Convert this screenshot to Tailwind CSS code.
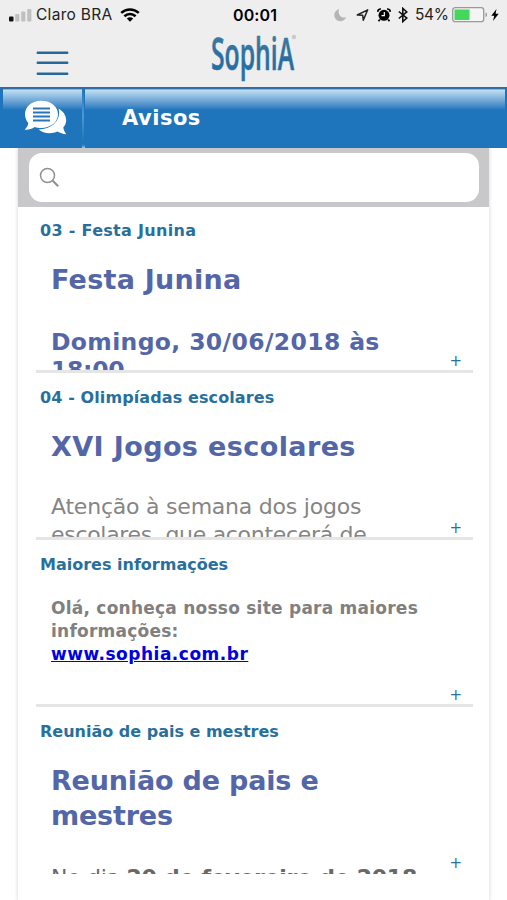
<!DOCTYPE html>
<html lang="pt-BR">
<head>
<meta charset="utf-8">
<meta name="viewport" content="width=device-width, initial-scale=1">
<title>Avisos</title>
<script src="https://cdn.jsdelivr.net/npm/@tailwindcss/browser@4"></script>
</head>
<body class="h-[900px] overflow-hidden bg-white font-['DejaVu_Sans',sans-serif]">
<header class="h-[87px] bg-[#eeeeee] text-black">
  <div class="flex h-[30px] items-center font-['Inter',sans-serif]">
    <svg class="ml-[9px] h-[14px] w-[23px] shrink-0" viewBox="0 0 23 14"><rect x="0" y="8.5" width="4.5" height="5" rx="1" fill="#111"/><g fill="#c0c0c0"><rect x="6.2" y="6" width="4.2" height="7.5" rx="1"/><rect x="12.2" y="3.5" width="4.2" height="10" rx="1"/><rect x="18.2" y="1" width="4.2" height="12.5" rx="1"/></g></svg>
    <span class="ml-[4px] w-[77px] whitespace-nowrap text-[15.5px] tracking-[0.3px] text-[#222]">Claro BRA</span>
    <svg class="ml-[7px] h-[14px] w-[20px] shrink-0" viewBox="0 0 20 14" fill="none" stroke="#000" stroke-width="2.6"><path d="M1.2 4.9C6.2.3 13.8.3 18.8 4.9"/><path d="M4.4 8.2c3.2-2.9 8-2.9 11.2 0"/><path d="M10 13.7 6.8 10.4c1.8-1.7 4.6-1.7 6.4 0Z" fill="#000" stroke="none"/></svg>
    <span class="ml-[93px] w-[46px] whitespace-nowrap text-[16px] font-semibold tracking-[0.1px]">00:01</span>
    <svg class="ml-[55px] h-[16px] w-[13px] shrink-0" viewBox="0 0 13 16"><path d="M5 2C2 3 .3 5.500.3 8.300c0 3.400 2.700 5.900 6 5.900 2.800 0 5-1.500 6-3.900C7.300 11.800 3.300 7.500 5 2Z" fill="#b5b5b5"/></svg>
    <svg class="ml-[9px] h-[14px] w-[13px] shrink-0" viewBox="0 0 13 14"><path d="M1.300 7 11.700 1.800 7.300 12.300 6.700 7.300Z" fill="none" stroke="#222" stroke-width="1.500" stroke-linejoin="round"/></svg>
    <svg class="ml-[8px] h-[14px] w-[14px] shrink-0" viewBox="0 0 14 14"><circle cx="7" cy="7.300" r="5.500"/><path d="M.7 3.900C.8 2 2.200.9 4 1M13.300 3.900C13.200 2 11.800.9 10 1M2.800 11.500 1.500 13.200M11.200 11.500l1.300 1.700" stroke="#000" stroke-width="1.700" fill="none"/><path d="M7.300 4v3.700H4.500" fill="none" stroke="#fff" stroke-width="1.200"/></svg>
    <svg class="ml-[7px] h-[16px] w-[10px] shrink-0" viewBox="0 0 10 16" fill="none" stroke="#111" stroke-width="1.600"><path d="m.8 4.500 8 6.600-4 3.500V1.400l4 3.500-8 6.600"/></svg>
    <span class="ml-[7px] w-[34px] whitespace-nowrap text-[15.500px] tracking-[-0.400px] text-[#222]">54%</span>
    <svg class="ml-[3px] h-[16px] w-[36px] shrink-0" viewBox="0 0 36 16"><rect x=".7" y=".7" width="31" height="14" rx="2.500" fill="#f5f5f5" stroke="#999" stroke-width="1.300"/><rect x="2.500" y="2.500" width="15" height="10.500" fill="#43d75b"/><path d="M33.500 5.500c2 .5 2 4 0 4.500Z" fill="#999"/></svg>
    <svg class="ml-[3px] h-[12px] w-[8px] shrink-0" viewBox="0 0 8 12"><path d="M5.500 0 .3 6.800h3L2 12l5.700-7.200H4.600Z"/></svg>
  </div>
  <div class="flex h-[57px] items-start">
    <svg class="mt-[21px] ml-[36px] h-[25px] w-[33px]" viewBox="0 0 33 25" stroke="#286898" stroke-width="2.500" stroke-linecap="round"><path d="M1.800 1.700h29.400M1.800 11.700h29.400M1.800 22.700h29.400"/></svg>
    <svg class="ml-[139px] h-[56px] w-[92px]" viewBox="0 0 92 56">
      <defs><linearGradient id="ink" x1="0" y1="0" x2="0" y2="1"><stop offset=".2" stop-color="#3f7ca3"/><stop offset=".65" stop-color="#286da0"/><stop offset="1" stop-color="#2573aa"/></linearGradient></defs>
      <text x="3" y="39.500" textLength="83" lengthAdjust="spacingAndGlyphs" font-family="Open Sans" font-size="45" font-weight="600" fill="url(#ink)" stroke="#3274a3" stroke-width=".6">SophiA</text>
      <circle cx="86" cy="7" r="2.200" fill="#c9c9c9"/>
    </svg>
  </div>
</header>
<nav class="flex h-[61px] border-t-2 border-[#2d6ea7] bg-[#1e75bc]">
  <div class="ml-[3px] flex w-[79px] items-start justify-center border-t border-[#78b9e7] bg-linear-to-b from-[#c1dff2] to-[#1e75bc] to-[20px]">
    <svg class="mt-[10px] ml-[6px] h-[36px] w-[43px]" viewBox="0 0 43 36"><path d="M34.500 8.500C42.500 13 44.500 22 39.300 27.500c.3 2.500 1.400 4.500 3 6.700-3.400-.1-6.300-1-8.800-2.600-6.800 2.800-14.500 1.700-19-2.200C28.500 29.500 37.500 20 34.500 8.500Z" fill="#fff"/><path d="M17.200.7C27.300.7 34 6.800 34 14.300S27.300 28 17.200 28c-2.500 0-4.500-.3-6.500-1-3 2-6.500 3.100-10 2.700 2.200-2 3.300-4 3.600-6.600C-3 14.500 2 .7 17.200.7Z" fill="#fff"/><path d="M9 8.500h17M9 12.500h17M9 16.500h17M9 20.500h17" stroke="#2677b9" stroke-width="1.800"/></svg>
  </div>
  <div class="h-[53px] w-[2px] bg-linear-to-b from-[#2474b7] via-[#4e99d0] to-[#1e75bc]"></div>
  <div class="mr-[2px] ml-[1px] grow border-t border-[#78b9e7] bg-linear-to-b from-[#c1dff2] to-[#1e75bc] to-[20px]">
    <h1 class="mt-[14px] ml-[37px] text-[21px] leading-[28px] font-bold tracking-[0.5px] text-white">Avisos</h1>
  </div>
</nav>
<main class="mx-[18px] h-[752px] bg-white shadow-[0_0_3px_1px_#dde3e8]">
  <div class="h-[59px] bg-[#c8c8cb] px-[11px] pt-[5px]">
    <label class="flex h-[49px] w-[450px] items-center rounded-[13px] bg-white pl-[10px]">
      <svg class="h-[21px] w-[21px]" viewBox="0 0 21 21" fill="none" stroke="#92908d"><circle cx="8.500" cy="8.500" r="7" stroke-width="1.500"/><path d="m13.500 13.500 5.700 5.700" stroke-width="2"/></svg>
      <input aria-label="Buscar" class="min-w-0 grow outline-none">
    </label>
  </div>
  <div class="ml-[18px] w-[437px]">
    <article class="relative h-[166px] overflow-hidden border-b-[3px] border-[#e5e5e5] pt-[12px]">
      <h2 class="ml-[4px] text-[16px] leading-[23px] font-bold tracking-[0.3px] text-[#286f9e]">03 - Festa Junina</h2>
      <div class="mt-[20px] ml-[15px] font-bold whitespace-nowrap text-[#5366a8]"><p class="text-[27px] leading-[36px] tracking-[0.25px]">Festa Junina</p><p class="mt-[30px] text-[23.500px] leading-[28px] tracking-[0.35px]">Domingo, 30/06/2018 às<br><span class="tracking-[-0.3px]">18:00</span></p></div>
      <span class="absolute right-[11px] bottom-px text-[15px] leading-[16px] text-[#286f9e]">+</span>
    </article>
    <article class="relative h-[167px] overflow-hidden border-b-[3px] border-[#e5e5e5] pt-[13px]">
      <h2 class="ml-[4px] text-[16px] leading-[23px] font-bold tracking-[0.1px] text-[#286f9e]">04 - Olimpíadas escolares</h2>
      <div class="mt-[20px] ml-[15px] whitespace-nowrap"><p class="text-[27px] leading-[36px] font-bold tracking-[0.4px] text-[#5366a8]">XVI Jogos escolares</p><p class="mt-[28px] text-[22px] leading-[28px] tracking-[-0.22px] text-[#858585]">Atenção à semana dos jogos<br><span class="tracking-[-0.3px]">escolares, que acontecerá de</span></p></div>
      <span class="absolute right-[11px] bottom-px text-[15px] leading-[16px] text-[#286f9e]">+</span>
    </article>
    <article class="relative h-[167px] overflow-hidden border-b-[3px] border-[#e5e5e5] pt-[13px]">
      <h2 class="ml-[4px] text-[16px] leading-[23px] font-bold text-[#286f9e]">Maiores informações</h2>
      <p class="mt-[21px] ml-[15px] text-[17px] leading-[23px] font-bold tracking-[0.24px] whitespace-nowrap text-[#808080]">Olá, conheça nosso site para maiores<br>informações:<br><a href="#" class="tracking-[0.5px] text-[#0000e0] underline">www.sophia.com.br</a></p>
      <span class="absolute right-[11px] bottom-px text-[15px] leading-[16px] text-[#286f9e]">+</span>
    </article>
    <article class="relative h-[167px] overflow-hidden pt-[13px]">
      <h2 class="ml-[4px] text-[16px] leading-[23px] font-bold text-[#286f9e]">Reunião de pais e mestres</h2>
      <div class="mt-[20px] ml-[15px] whitespace-nowrap"><p class="text-[27px] leading-[35px] font-bold tracking-[-0.18px] text-[#5366a8]">Reunião de pais e<br>mestres</p><p class="mt-[31px] text-[22px] leading-[28px] tracking-[-0.28px] text-[#686868]">No dia <b>20 de fevereiro de 2018</b></p></div>
      <span class="absolute right-[11px] bottom-[3px] text-[15px] leading-[16px] text-[#286f9e]">+</span>
    </article>
  </div>
</main>
</body>
</html>
